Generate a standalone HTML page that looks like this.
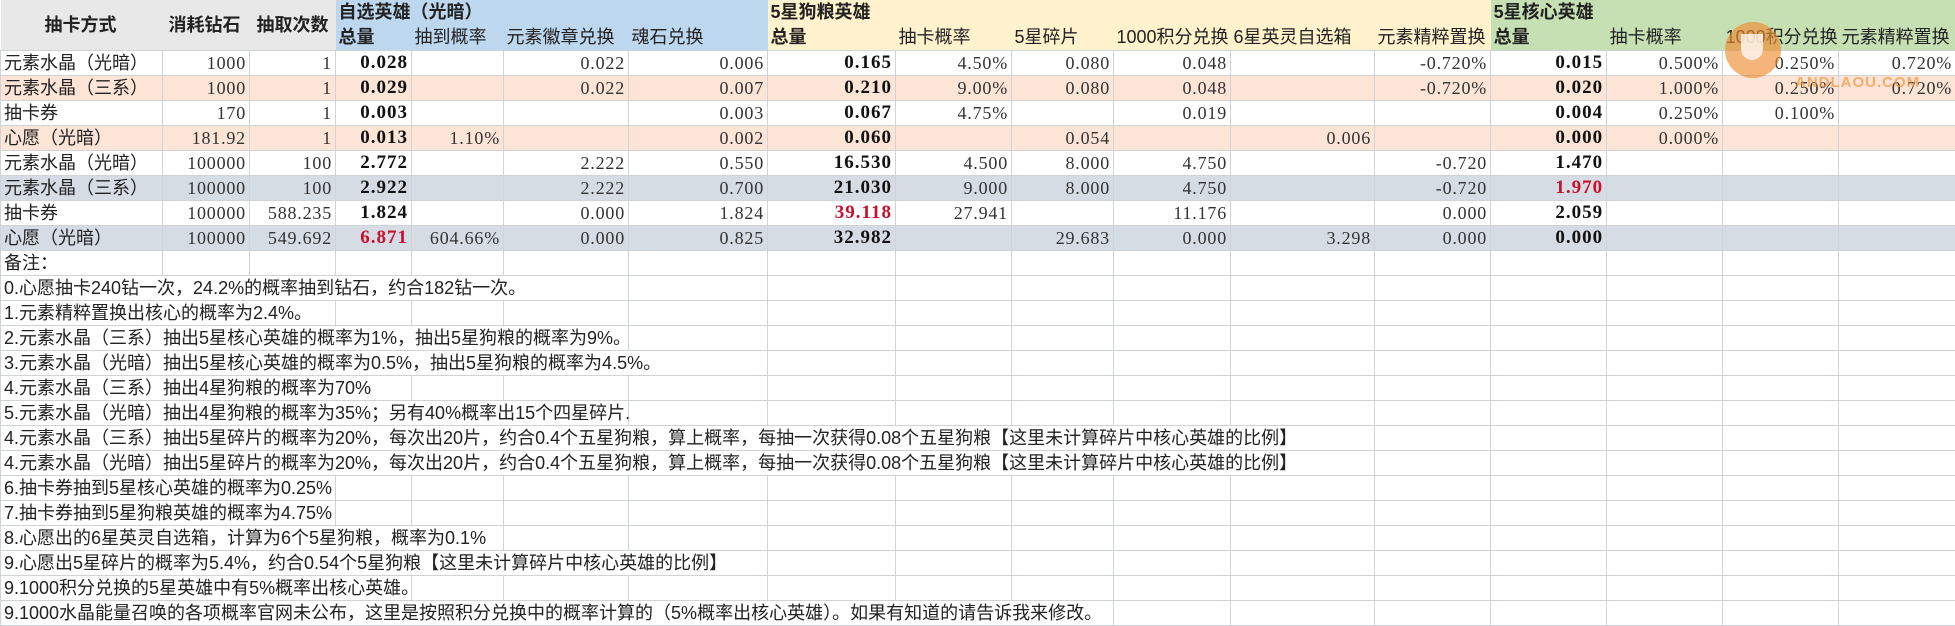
<!DOCTYPE html>
<html><head><meta charset="utf-8">
<style>
html,body{margin:0;padding:0;background:#fff;width:1955px;height:626px;overflow:hidden}
table{border-collapse:collapse;table-layout:fixed;position:absolute;left:0;top:0;width:1955px}
td{font-family:"Liberation Serif","Noto Serif CJK SC",serif;font-size:18px;color:#333;height:24px;padding:0 3px;border:1px solid #cfd4d9;white-space:nowrap;overflow:visible;text-align:right;line-height:24px;letter-spacing:0.8px}
td.l{text-align:left;letter-spacing:0}
td.b{font-weight:bold;font-size:19px;color:#111;letter-spacing:1px}
td.r{color:#c8102e}
tr.h td{border:none;text-align:left;font-family:"Liberation Sans","Noto Sans CJK SC",sans-serif;height:25px;line-height:25px;font-size:18px;letter-spacing:0;color:#222}
tr.h td.g{background:#e8e8e8;font-weight:bold;vertical-align:middle}
.bl{background:#bdd7ee}.ye{background:#fff2cc}.gr{background:#c6e0b4}
tr.p td{background:#fce4d6}
tr.s td{background:#d6dce4}
td.n{font-family:"Liberation Sans","Noto Sans CJK SC",sans-serif;text-align:left;overflow:visible;letter-spacing:0;color:#222}
td.c1{font-family:"Liberation Sans","Noto Sans CJK SC",sans-serif;color:#222}
.wm{position:absolute;left:1725px;top:22px;width:56px;height:56px;border-radius:50%;background:rgba(240,140,50,.65)}
.wm2{position:absolute;left:1741px;top:34px;width:22px;height:26px;border-radius:0 0 12px 12px;background:rgba(255,255,255,.75)}
.wt{position:absolute;left:1795px;top:74px;font:bold 15px "Liberation Sans",sans-serif;color:rgba(240,150,60,.7);letter-spacing:1px}
</style></head><body>
<table>
<colgroup>
<col style="width:162px"><col style="width:87px"><col style="width:86px"><col style="width:76px"><col style="width:92px"><col style="width:125px"><col style="width:139px"><col style="width:128px"><col style="width:116px"><col style="width:102px"><col style="width:117px"><col style="width:144px"><col style="width:116px"><col style="width:116px"><col style="width:116px"><col style="width:116px"><col style="width:117px">
</colgroup>
<tr class="h">
<td class="g" rowspan="2" style="padding-left:44px">抽卡方式</td>
<td class="g" rowspan="2" style="padding-left:6px">消耗钻石</td>
<td class="g" rowspan="2" style="padding-left:7px">抽取次数</td>
<td class="bl" colspan="4" style="font-weight:bold">自选英雄（光暗）</td>
<td class="ye" colspan="6" style="font-weight:bold">5星狗粮英雄</td>
<td class="gr" colspan="4" style="font-weight:bold">5星核心英雄</td>
</tr>
<tr class="h">
<td class="bl" style="font-weight:bold">总量</td><td class="bl">抽到概率</td><td class="bl">元素徽章兑换</td><td class="bl">魂石兑换</td>
<td class="ye" style="font-weight:bold">总量</td><td class="ye">抽卡概率</td><td class="ye">5星碎片</td><td class="ye">1000积分兑换</td><td class="ye">6星英灵自选箱</td><td class="ye">元素精粹置换</td>
<td class="gr" style="font-weight:bold">总量</td><td class="gr">抽卡概率</td><td class="gr">1000积分兑换</td><td class="gr">元素精粹置换</td>
</tr>
<tr><td class="l c1">元素水晶（光暗）</td><td>1000</td><td>1</td><td class="b">0.028</td><td></td><td>0.022</td><td>0.006</td><td class="b">0.165</td><td>4.50%</td><td>0.080</td><td>0.048</td><td></td><td>-0.720%</td><td class="b">0.015</td><td>0.500%</td><td>0.250%</td><td>0.720%</td></tr>
<tr class="p"><td class="l c1">元素水晶（三系）</td><td>1000</td><td>1</td><td class="b">0.029</td><td></td><td>0.022</td><td>0.007</td><td class="b">0.210</td><td>9.00%</td><td>0.080</td><td>0.048</td><td></td><td>-0.720%</td><td class="b">0.020</td><td>1.000%</td><td>0.250%</td><td>0.720%</td></tr>
<tr><td class="l c1">抽卡券</td><td>170</td><td>1</td><td class="b">0.003</td><td></td><td></td><td>0.003</td><td class="b">0.067</td><td>4.75%</td><td></td><td>0.019</td><td></td><td></td><td class="b">0.004</td><td>0.250%</td><td>0.100%</td><td></td></tr>
<tr class="p"><td class="l c1">心愿（光暗）</td><td>181.92</td><td>1</td><td class="b">0.013</td><td>1.10%</td><td></td><td>0.002</td><td class="b">0.060</td><td></td><td>0.054</td><td></td><td>0.006</td><td></td><td class="b">0.000</td><td>0.000%</td><td></td><td></td></tr>
<tr><td class="l c1">元素水晶（光暗）</td><td>100000</td><td>100</td><td class="b">2.772</td><td></td><td>2.222</td><td>0.550</td><td class="b">16.530</td><td>4.500</td><td>8.000</td><td>4.750</td><td></td><td>-0.720</td><td class="b">1.470</td><td></td><td></td><td></td></tr>
<tr class="s"><td class="l c1">元素水晶（三系）</td><td>100000</td><td>100</td><td class="b">2.922</td><td></td><td>2.222</td><td>0.700</td><td class="b">21.030</td><td>9.000</td><td>8.000</td><td>4.750</td><td></td><td>-0.720</td><td class="b r">1.970</td><td></td><td></td><td></td></tr>
<tr><td class="l c1">抽卡券</td><td>100000</td><td>588.235</td><td class="b">1.824</td><td></td><td>0.000</td><td>1.824</td><td class="b r">39.118</td><td>27.941</td><td></td><td>11.176</td><td></td><td>0.000</td><td class="b">2.059</td><td></td><td></td><td></td></tr>
<tr class="s"><td class="l c1">心愿（光暗）</td><td>100000</td><td>549.692</td><td class="b r">6.871</td><td>604.66%</td><td>0.000</td><td>0.825</td><td class="b">32.982</td><td></td><td>29.683</td><td>0.000</td><td>3.298</td><td>0.000</td><td class="b">0.000</td><td></td><td></td><td></td></tr>
<tr><td class="n">备注：</td><td></td><td></td><td></td><td></td><td></td><td></td><td></td><td></td><td></td><td></td><td></td><td></td><td></td><td></td><td></td><td></td></tr>
<tr><td class="n" colspan="6">0.心愿抽卡240钻一次，24.2%的概率抽到钻石，约合182钻一次。</td><td></td><td></td><td></td><td></td><td></td><td></td><td></td><td></td><td></td><td></td><td></td></tr>
<tr><td class="n" colspan="3">1.元素精粹置换出核心的概率为2.4%。</td><td></td><td></td><td></td><td></td><td></td><td></td><td></td><td></td><td></td><td></td><td></td><td></td><td></td><td></td></tr>
<tr><td class="n" colspan="6">2.元素水晶（三系）抽出5星核心英雄的概率为1%，抽出5星狗粮的概率为9%。</td><td></td><td></td><td></td><td></td><td></td><td></td><td></td><td></td><td></td><td></td><td></td></tr>
<tr><td class="n" colspan="7">3.元素水晶（光暗）抽出5星核心英雄的概率为0.5%，抽出5星狗粮的概率为4.5%。</td><td></td><td></td><td></td><td></td><td></td><td></td><td></td><td></td><td></td><td></td></tr>
<tr><td class="n" colspan="4">4.元素水晶（三系）抽出4星狗粮的概率为70%</td><td></td><td></td><td></td><td></td><td></td><td></td><td></td><td></td><td></td><td></td><td></td><td></td><td></td></tr>
<tr><td class="n" colspan="6">5.元素水晶（光暗）抽出4星狗粮的概率为35%；另有40%概率出15个四星碎片.</td><td></td><td></td><td></td><td></td><td></td><td></td><td></td><td></td><td></td><td></td><td></td></tr>
<tr><td class="n" colspan="12">4.元素水晶（三系）抽出5星碎片的概率为20%，每次出20片，约合0.4个五星狗粮，算上概率，每抽一次获得0.08个五星狗粮【这里未计算碎片中核心英雄的比例】</td><td></td><td></td><td></td><td></td><td></td></tr>
<tr><td class="n" colspan="12">4.元素水晶（光暗）抽出5星碎片的概率为20%，每次出20片，约合0.4个五星狗粮，算上概率，每抽一次获得0.08个五星狗粮【这里未计算碎片中核心英雄的比例】</td><td></td><td></td><td></td><td></td><td></td></tr>
<tr><td class="n" colspan="3">6.抽卡券抽到5星核心英雄的概率为0.25%</td><td></td><td></td><td></td><td></td><td></td><td></td><td></td><td></td><td></td><td></td><td></td><td></td><td></td><td></td></tr>
<tr><td class="n" colspan="3">7.抽卡券抽到5星狗粮英雄的概率为4.75%</td><td></td><td></td><td></td><td></td><td></td><td></td><td></td><td></td><td></td><td></td><td></td><td></td><td></td><td></td></tr>
<tr><td class="n" colspan="5">8.心愿出的6星英灵自选箱，计算为6个5星狗粮，概率为0.1%</td><td></td><td></td><td></td><td></td><td></td><td></td><td></td><td></td><td></td><td></td><td></td><td></td></tr>
<tr><td class="n" colspan="7">9.心愿出5星碎片的概率为5.4%，约合0.54个5星狗粮【这里未计算碎片中核心英雄的比例】</td><td></td><td></td><td></td><td></td><td></td><td></td><td></td><td></td><td></td><td></td></tr>
<tr><td class="n" colspan="4">9.1000积分兑换的5星英雄中有5%概率出核心英雄。</td><td></td><td></td><td></td><td></td><td></td><td></td><td></td><td></td><td></td><td></td><td></td><td></td><td></td></tr>
<tr><td class="n" colspan="10">9.1000水晶能量召唤的各项概率官网未公布，这里是按照积分兑换中的概率计算的（5%概率出核心英雄）。如果有知道的请告诉我来修改。</td><td></td><td></td><td></td><td></td><td></td><td></td><td></td></tr>
</table>
<div class="wm"></div><div class="wm2"></div>
<div class="wt">ANDLAOU.COM</div>
</body></html>
